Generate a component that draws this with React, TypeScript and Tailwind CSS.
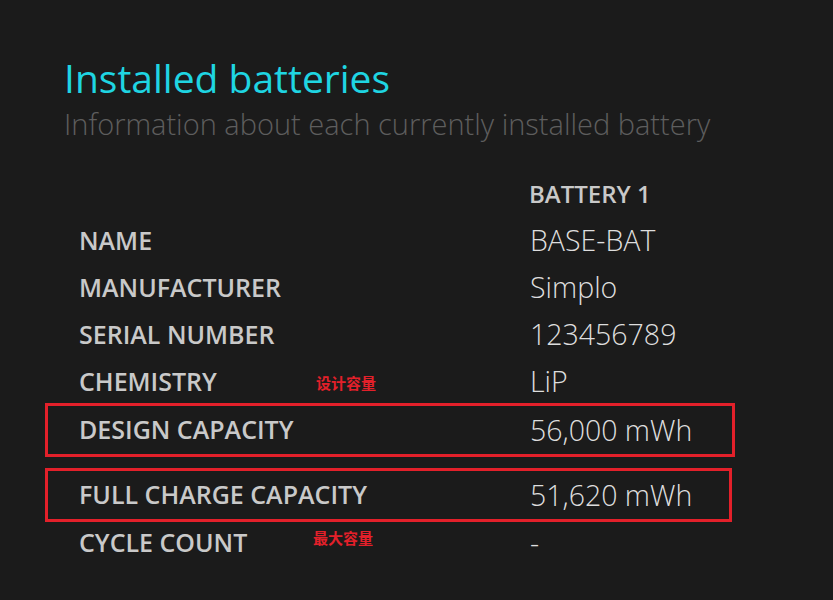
import React from 'react';

const ROWS = [
  { label: 'NAME', value: 'BASE-BAT' },
  { label: 'MANUFACTURER', value: 'Simplo' },
  { label: 'SERIAL NUMBER', value: '123456789' },
  { label: 'CHEMISTRY', value: 'LiP' },
];

const font = { fontFamily: '"Open Sans", "Noto Sans CJK SC", sans-serif' };

function Cells({ label, value }: { label: string; value: string }) {
  return (
    <>
      <div className="w-[451px] shrink-0 text-[25px] font-semibold text-[#c9c9c9]">{label}</div>
      <div className="text-[28.5px] font-light text-[#dedede]">{value}</div>
    </>
  );
}

function Row({ label, value, tall = true }: { label: string; value: string; tall?: boolean }) {
  return (
    <div className={`flex items-center pl-[79px] ${tall ? 'h-[47px]' : 'h-[42px]'}`}>
      <Cells label={label} value={value} />
    </div>
  );
}

function BoxedRow({ label, value, width }: { label: string; value: string; width: string }) {
  return (
    <div className={`ml-[45px] ${width} h-[54px] border-[3px] border-[#e3202a] flex items-center pl-[31px]`}>
      <Cells label={label} value={value} />
    </div>
  );
}

export default function App() {
  return (
    <div className="w-[833px] h-[600px] bg-[#1b1b1b] overflow-hidden relative" style={font}>
      <div className="pt-[52px] pl-[64px]">
        <h1 className="text-[39px] leading-[52px] text-[#1fd5e2]">Installed batteries</h1>
        <p className="text-[29px] leading-[40px] font-light text-[#5e5e5e]">Information about each currently installed battery</p>
      </div>
      <div className="mt-[26px]">
        <div className="h-[47px] flex items-center pl-[529px] text-[24px] font-semibold text-[#c9c9c9]">BATTERY 1</div>
        {ROWS.map(r => (
          <Row key={r.label} {...r} />
        ))}
        <div className="-mt-[2px]">
          <BoxedRow label="DESIGN CAPACITY" value="56,000 mWh" width="w-[690px]" />
          <div className="h-[11px]" />
          <BoxedRow label="FULL CHARGE CAPACITY" value="51,620 mWh" width="w-[687px]" />
          <Row label="CYCLE COUNT" value="-" tall={false} />
        </div>
      </div>
      <span className="absolute left-[316px] top-[372px] text-[15px] leading-[22px] font-bold text-[#e3202a]">设计容量</span>
      <span className="absolute left-[313px] top-[527px] text-[15px] leading-[22px] font-bold text-[#e3202a]">最大容量</span>
    </div>
  );
}
